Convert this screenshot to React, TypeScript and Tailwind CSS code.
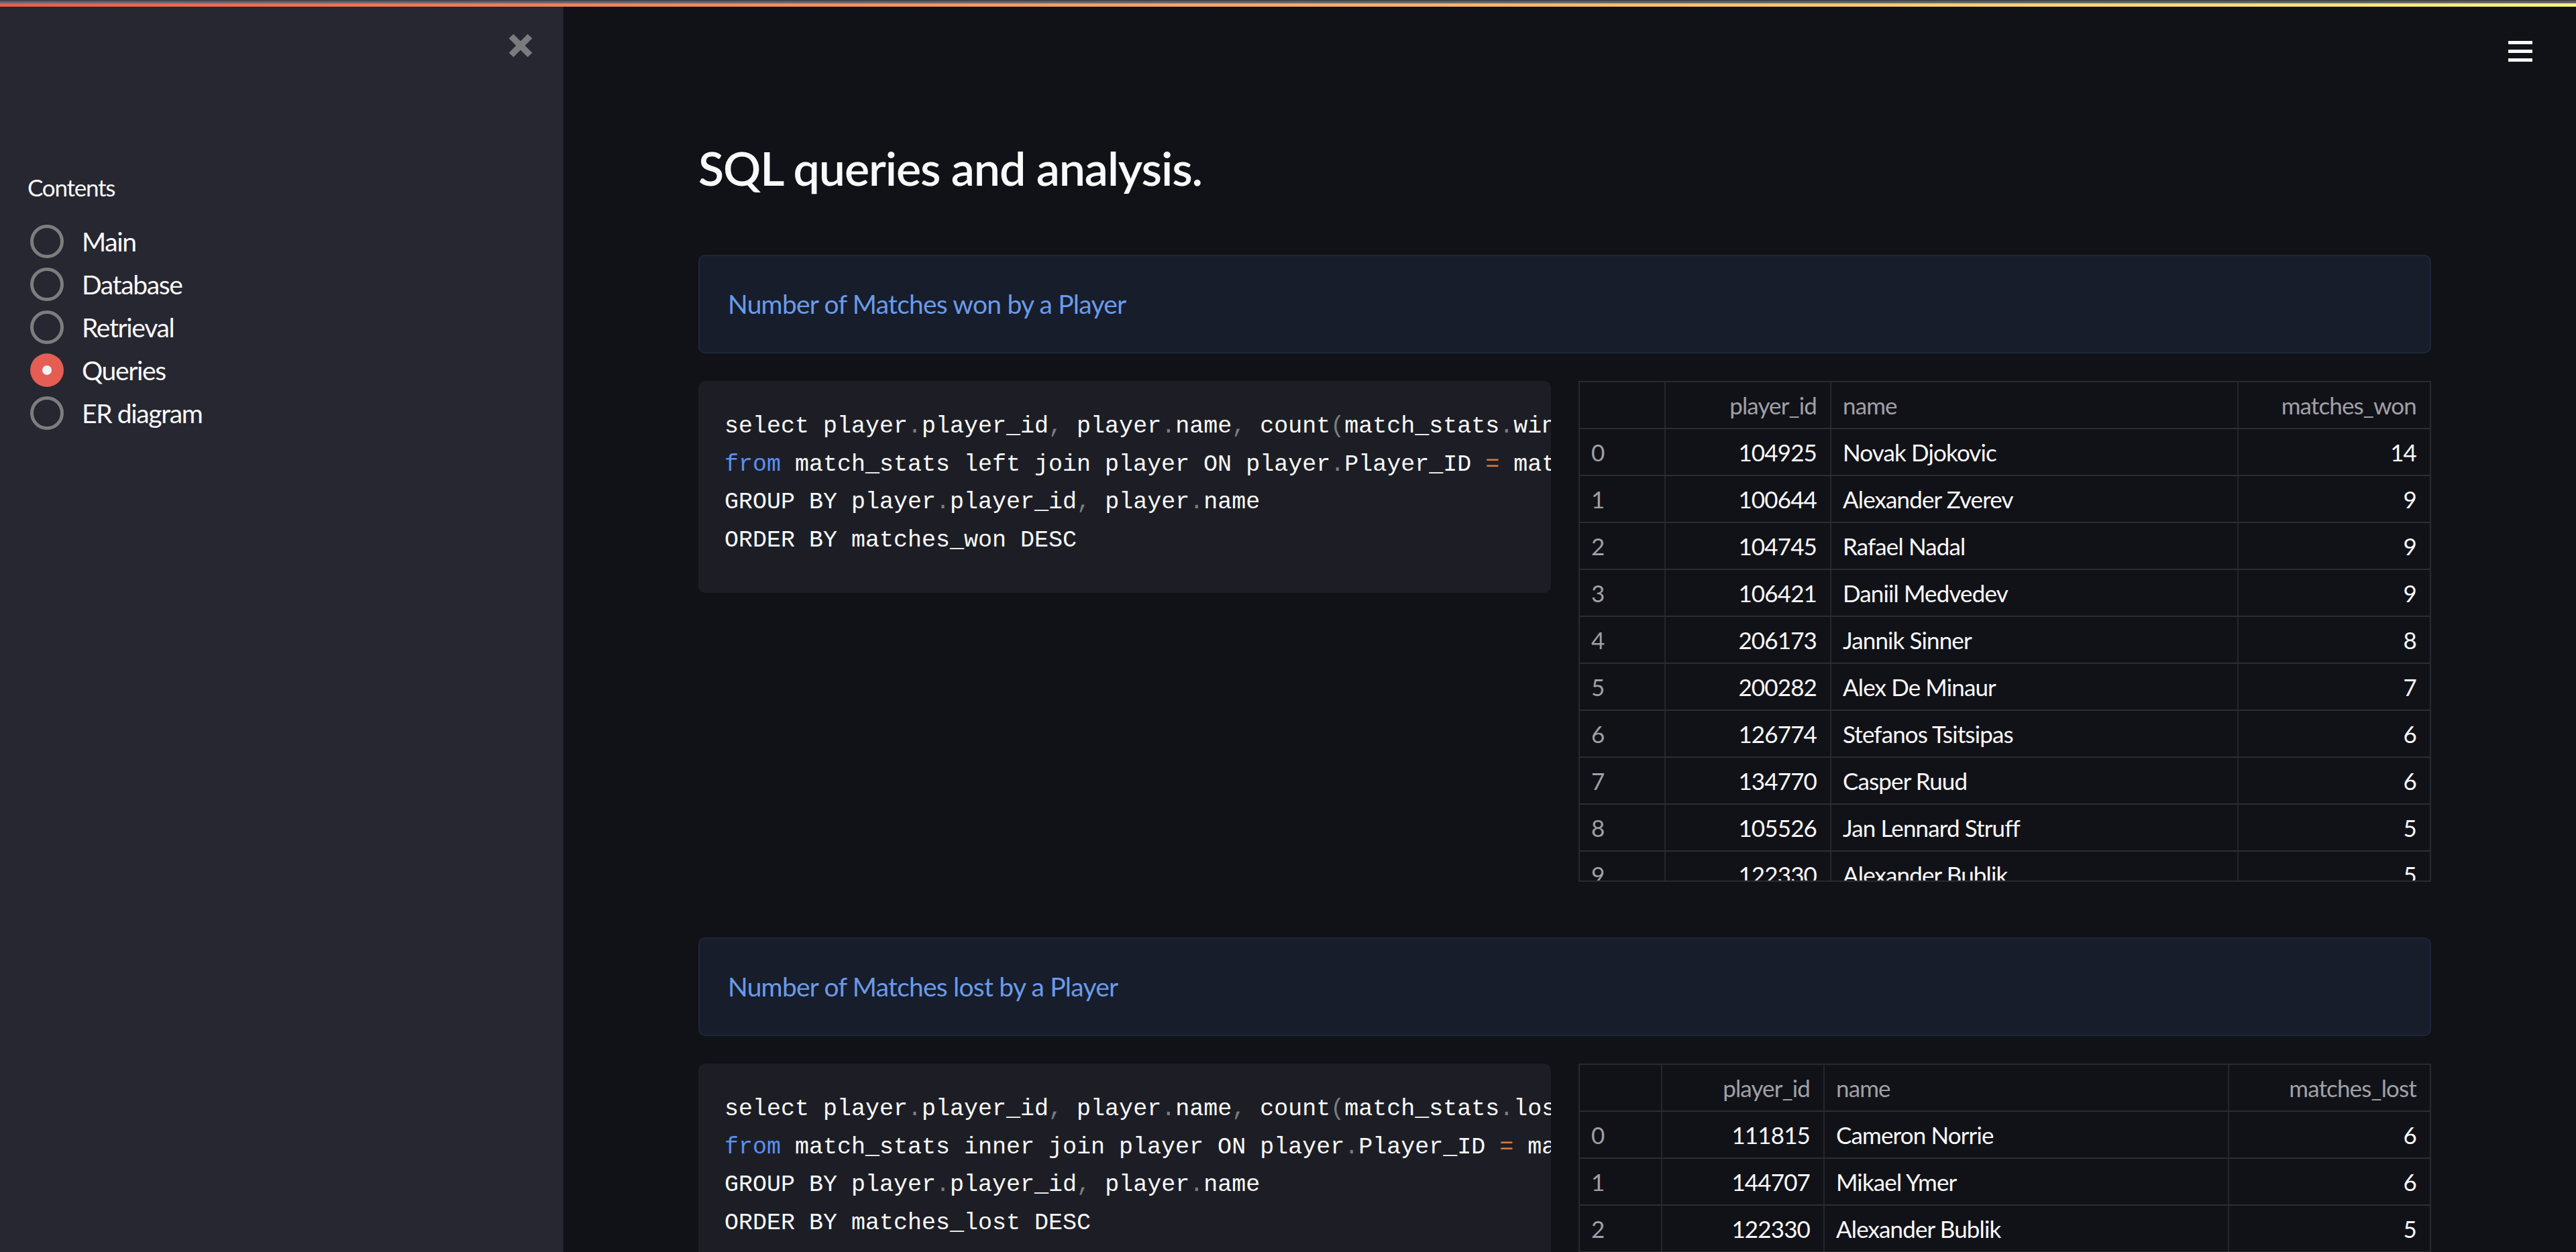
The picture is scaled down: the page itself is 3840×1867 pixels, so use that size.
import React from "react";

const sans = { fontFamily: "Lato, 'Noto Sans', sans-serif" };
const mono = { fontFamily: "'Liberation Mono', 'DejaVu Sans Mono', monospace" };

const pages = ["Main", "Database", "Retrieval", "Queries", "ER diagram"];

const wonRows = [
  ["0", "104925", "Novak Djokovic", "14"],
  ["1", "100644", "Alexander Zverev", "9"],
  ["2", "104745", "Rafael Nadal", "9"],
  ["3", "106421", "Daniil Medvedev", "9"],
  ["4", "206173", "Jannik Sinner", "8"],
  ["5", "200282", "Alex De Minaur", "7"],
  ["6", "126774", "Stefanos Tsitsipas", "6"],
  ["7", "134770", "Casper Ruud", "6"],
  ["8", "105526", "Jan Lennard Struff", "5"],
  ["9", "122330", "Alexander Bublik", "5"],
  ["10", "106233", "Dominic Thiem", "5"],
];

const lostRows = [
  ["0", "111815", "Cameron Norrie", "6"],
  ["1", "144707", "Mikael Ymer", "6"],
  ["2", "122330", "Alexander Bublik", "5"],
  ["3", "200005", "Ugo Humbert", "5"],
];

// tiny sql highlighter: keyword "from", "=" and punctuation
const CodeLine = ({ line }: { line: string }) => {
  const parts = line.split(/(\bfrom\b|[.,()]|=)/g).filter((p) => p !== "");
  return (
    <div className="whitespace-pre">
      {parts.map((p, i) => {
        if (p === "from") return <span key={i} className="text-[#5b8ff0]">{p}</span>;
        if (p === "=") return <span key={i} className="text-[#d97a3a]">{p}</span>;
        if (/^[.,()]$/.test(p)) return <span key={i} className="text-[#7c7c82]">{p}</span>;
        return <span key={i}>{p}</span>;
      })}
    </div>
  );
};

const CodeBlock = ({ lines }: { lines: string[] }) => (
  <div className="h-[316px] rounded-[10px] bg-[#1d1e25] pt-[40px] pl-[39px] overflow-hidden text-[35px] leading-[56.5px] tracking-normal text-[#fafafa]" style={mono}>
    {lines.map((l, i) => (
      <CodeLine key={i} line={l} />
    ))}
  </div>
);

const DataTable = ({ cols, head, rows, height }: { cols: string; head: string[]; rows: string[][]; height: string }) => (
  <div className={`border-2 border-[#282a30] overflow-hidden bg-[#111218] text-[35px] tracking-[-0.025em] ${height}`}>
    {[head, ...rows].map((r, ri) => (
      <div key={ri} className={`grid ${cols} h-[70px] border-b-2 border-[#2b2d33]`}>
        {r.map((c, ci) => {
          const isHead = ri === 0;
          const right = ci === 1 || ci === 3;
          const gray = isHead || ci === 0;
          return (
            <div
              key={ci}
              className={`flex items-center ${right ? "justify-end px-[20px]" : "px-[17px]"} ${ci < 3 ? "border-r-2 border-[#24262c]" : ""} ${gray ? "text-[#a0a0a6]" : "text-[#fafafa]"}`}
            >
              {c}
            </div>
          );
        })}
      </div>
    ))}
  </div>
);

const InfoBox = ({ text }: { text: string }) => (
  <div className="h-[147px] rounded-[10px] border-2 border-[#1e2738] bg-[#171d2b] pl-[42px] flex items-center text-[39px] tracking-[-0.02em] text-[#6a9be8]">
    {text}
  </div>
);

export default function App() {
  return (
    <div className="h-screen w-full overflow-hidden flex flex-col bg-[#101217] tracking-[-0.03em]" style={sans}>
      <div className="h-[2px] bg-[#45464b]" />
      <div className="h-[3px] bg-[#67686c]" />
      <div className="h-[5px] bg-gradient-to-r from-[#e45e52] to-[#fff27f]" />
      <div className="flex flex-1 min-h-0">
        <aside className="w-[840px] shrink-0 bg-[#262730]">
          <div className="flex justify-end pr-[46px] pt-[40px]">
            <svg width="36" height="36" viewBox="0 0 36 36">
              <path d="M4 4 L32 32 M32 4 L4 32" stroke="#7a7a7f" strokeWidth="9.5" />
            </svg>
          </div>
          <div className="pl-[41px] mt-[169px] text-[35px] leading-[49px] tracking-[-0.035em] text-[#fafafa]">Contents</div>
          <div className="mt-[24px] pl-[45px] flex flex-col">
            {pages.map((p) => {
              const on = p === "Queries";
              return (
                <div key={p} className="h-[64px] flex items-center gap-[27px]">
                  {on ? (
                    <div className="w-[50px] h-[50px] rounded-full bg-[#e45e54] flex items-center justify-center">
                      <div className="w-[14px] h-[14px] rounded-full bg-[#f0f2f6]" />
                    </div>
                  ) : (
                    <div className="w-[50px] h-[50px] rounded-full border-[5px] border-[#7d7d80]" />
                  )}
                  <span className="text-[39px] tracking-[-0.035em] text-[#fafafa]">{p}</span>
                </div>
              );
            })}
          </div>
        </aside>

        <main className="relative flex-1 pl-[201px] pr-[216px]">
          <div className="absolute right-[65px] top-[51px] flex flex-col gap-[8px]">
            <div className="w-[36px] h-[5px] bg-[#fafafa]" />
            <div className="w-[36px] h-[5px] bg-[#fafafa]" />
            <div className="w-[36px] h-[5px] bg-[#fafafa]" />
          </div>

          <h1 className="pt-[198px] text-[70px] leading-[84px] font-semibold tracking-[-0.016em] text-[#fafafa]">SQL queries and analysis.</h1>

          <div className="mt-[88px]">
            <InfoBox text="Number of Matches won by a Player" />
            <div className="mt-[41px] grid grid-cols-2 gap-[41px] items-start">
              <CodeBlock
                lines={[
                  "select player.player_id, player.name, count(match_stats.winner_id) as matches_won",
                  "from match_stats left join player ON player.Player_ID = match_stats.winner_id",
                  "GROUP BY player.player_id, player.name",
                  "ORDER BY matches_won DESC",
                ]}
              />
              <DataTable
                cols="grid-cols-[128px_247px_607px_1fr]"
                head={["", "player_id", "name", "matches_won"]}
                rows={wonRows}
                height="h-[747px]"
              />
            </div>
          </div>

          <div className="mt-[83px]">
            <InfoBox text="Number of Matches lost by a Player" />
            <div className="mt-[41px] grid grid-cols-2 gap-[41px] items-start">
              <CodeBlock
                lines={[
                  "select player.player_id, player.name, count(match_stats.loser_id) as matches_lost",
                  "from match_stats inner join player ON player.Player_ID = match_stats.loser_id",
                  "GROUP BY player.player_id, player.name",
                  "ORDER BY matches_lost DESC",
                ]}
              />
              <DataTable
                cols="grid-cols-[123px_242px_603px_1fr]"
                head={["", "player_id", "name", "matches_lost"]}
                rows={lostRows}
                height="h-[747px]"
              />
            </div>
          </div>
        </main>
      </div>
    </div>
  );
}
